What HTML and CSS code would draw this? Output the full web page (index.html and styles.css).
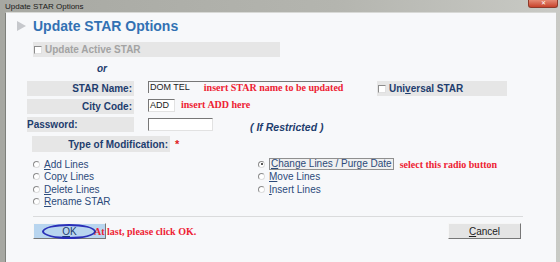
FILE: index.html
```html
<!DOCTYPE html>
<html lang="en">
<head>
  <meta charset="UTF-8">
  <title>Update STAR Options</title>
  <link rel="stylesheet" href="styles.css">
</head>
<body>
  <div class="window">
    <div class="titlebar">
      <span class="title">Update STAR Options</span>
      <span class="close">&#x2715;</span>
    </div>
    <div class="content">
      <h1><span class="arrow"></span>Update STAR Options</h1>

      <div class="band active"><span class="chk"></span>Update Active STAR</div>
      <div class="or">or</div>

      <div class="row first">
        <div class="label">STAR Name:</div>
        <div class="field wide"><span>DOM TEL</span><span class="note">insert STAR name to be updated</span></div>
        <div class="band universal"><span class="chk"></span><span>Uni<u>v</u>ersal STAR</span></div>
      </div>
      <div class="row">
        <div class="label">City Code:</div>
        <div class="field small">ADD</div>
        <span class="note">insert ADD here</span>
      </div>
      <div class="row">
        <div class="label left">Password:</div>
        <div class="field pass"></div>
        <span class="hint">( If Restricted )</span>
      </div>

      <div class="type-row">
        <div class="band type">Type of Modification:</div>
        <span class="star">*</span>
      </div>

      <div class="radios">
        <div class="col">
          <div class="radio"><span class="dot"></span><span><u>A</u>dd Lines</span></div>
          <div class="radio"><span class="dot"></span><span>Cop<u>y</u> Lines</span></div>
          <div class="radio"><span class="dot"></span><span><u>D</u>elete Lines</span></div>
          <div class="radio"><span class="dot"></span><span><u>R</u>ename STAR</span></div>
        </div>
        <div class="col right">
          <div class="radio"><span class="dot on"></span><span class="focus"><u>C</u>hange Lines / Purge Date</span><span class="note">select this radio button</span></div>
          <div class="radio"><span class="dot"></span><span><u>M</u>ove Lines</span></div>
          <div class="radio"><span class="dot"></span><span><u>I</u>nsert Lines</span></div>
        </div>
      </div>

      <div class="rule"></div>

      <div class="buttons">
        <div class="ok-wrap">
          <button class="btn ok"><u>O</u>K</button>
          <span class="note">At last, please click OK.</span>
        </div>
        <button class="btn"><u>C</u>ancel</button>
      </div>
    </div>
  </div>
</body>
</html>
```

FILE: styles.css
```css
body {
  margin: 0;
  font-family: "Liberation Sans", Arial, sans-serif;
  background: #a8a9a3;
}
.window {
  width: 560px;
  height: 262px;
  display: flex;
  flex-direction: column;
  background: linear-gradient(90deg, #a7a8a2 0%, #b4b5af 60%, #c9cac5 100%);
}
.titlebar {
  height: 12px;
  display: flex;
  justify-content: space-between;
  align-items: flex-start;
  padding: 0 2px 0 5px;
}
.title {
  font-size: 8px;
  color: #1a1a1a;
  line-height: 12px;
  margin-top: 1px;
}
.close {
  width: 28px;
  height: 7px;
  background: linear-gradient(#e58a74, #c8432c);
  border: 1px solid #8e3a2a;
  border-top: none;
  border-radius: 0 0 3px 3px;
  color: #fff;
  font-size: 6px;
  line-height: 7px;
  text-align: center;
}
.content {
  flex: 1;
  margin: 0 4px 0 5px;
  background: #f7f8fa;
  border-left: 1px solid #7e807b;
  border-top: 1px solid #d8d9d6;
  padding-left: 21px;
  white-space: nowrap;
}
h1 {
  margin: 4px 0 0 -10px;
  font-size: 14px;
  color: #3271b3;
  display: flex;
  align-items: center;
  gap: 7px;
  height: 17px;
}
.arrow {
  width: 0;
  height: 0;
  border-left: 9px solid #c6c8cc;
  border-top: 5px solid transparent;
  border-bottom: 5px solid transparent;
}
.band {
  background: #e6e6e6;
  height: 15px;
  display: flex;
  align-items: center;
  font-size: 10px;
  font-weight: bold;
  color: #1e3d6e;
}
.band.active {
  width: 247px;
  margin: 8px 0 0 6px;
  color: #a3a3a3;
}
.chk {
  width: 6px;
  height: 6px;
  border: 1px solid #8c8c8c;
  border-right-color: #e0e0e0;
  border-bottom-color: #e0e0e0;
  background: #fff;
  margin: 0 3px 0 1px;
}
.or {
  margin: 6px 0 0 70px;
  font-size: 10px;
  font-weight: bold;
  font-style: italic;
  color: #1e3d6e;
  height: 12px;
  line-height: 12px;
}
.row {
  display: flex;
  align-items: flex-start;
  height: 15px;
  margin-top: 3px;
}
.row.first { margin-top: 6px; }
.label {
  width: 105px;
  height: 15px;
  background: #e6e6e6;
  font-size: 10px;
  font-weight: bold;
  color: #1e3d6e;
  text-align: right;
  padding-right: 2px;
  line-height: 16px;
  margin-right: 14px;
}
.label.left { text-align: left; }
.field {
  height: 11px;
  background: #fff;
  border-top: 1px solid #777;
  border-left: 1px solid #777;
  border-right: 1px solid #e2e2e2;
  border-bottom: 1px solid #e2e2e2;
  font-size: 9px;
  line-height: 11px;
  color: #222;
  padding-left: 1px;
  display: flex;
  gap: 14px;
}
.field.wide { width: 192px; background: transparent; border-right: none; border-bottom: none; }
.field.small { width: 24px; }
.field.pass { width: 62px; margin-top: 1px; }
.note {
  font-family: "Liberation Serif", "Times New Roman", serif;
  font-weight: bold;
  font-size: 10px;
  color: #ee2233;
}
.row > .note { margin-left: 6px; line-height: 12px; }
.band.universal {
  width: 130px;
  margin-left: 35px;
  font-size: 10px;
}
.hint {
  margin: 4px 0 0 37px;
  font-size: 10.5px;
  font-weight: bold;
  font-style: italic;
  color: #1e3d6e;
}
.type-row {
  display: flex;
  align-items: flex-start;
  margin: 4px 0 0 5px;
}
.band.type {
  width: 136px;
  height: 16px;
  justify-content: flex-end;
  padding-right: 2px;
}
.star {
  color: #e02020;
  font-weight: bold;
  font-size: 11px;
  margin: 2px 0 0 5px;
}
.radios {
  display: flex;
  margin: 6px 0 0 6px;
}
.col { width: 225px; }
.col.right { width: 280px; }
.radio {
  display: flex;
  align-items: center;
  height: 12.5px;
  font-size: 10px;
  color: #2c4a7a;
}
.dot {
  width: 5px;
  height: 5px;
  border-radius: 50%;
  border: 1px solid #8c8c8c;
  border-right-color: #ddd;
  border-bottom-color: #ddd;
  background: #fff;
  margin-right: 4px;
  position: relative;
}
.dot.on::after {
  content: "";
  position: absolute;
  left: 1.5px;
  top: 1.5px;
  width: 2px;
  height: 2px;
  border-radius: 50%;
  background: #222;
}
.focus {
  border: 1px solid #8f8f8f;
  background: #f0f0f0;
  padding: 0 1px;
  line-height: 10px;
  margin-right: 6px;
}
.rule {
  height: 1px;
  width: 490px;
  background: #dadbdc;
  margin: 8px 0 0 6px;
}
.buttons {
  display: flex;
  justify-content: space-between;
  width: 488px;
  margin: 6px 0 0 6px;
}
.ok-wrap {
  display: flex;
  align-items: center;
}
.ok-wrap .note { margin-left: -12px; position: relative; }
.btn {
  width: 73px;
  height: 16px;
  padding: 0;
  font-family: "Liberation Sans", Arial, sans-serif;
  font-size: 10px;
  color: #222;
  background: #e4e4e4;
  border: 1px solid #f6f6f6;
  border-right-color: #777;
  border-bottom-color: #777;
}
.btn.ok {
  background: #b8d5ef;
  color: #1e3d6e;
  position: relative;
}
.btn.ok::before {
  content: "";
  position: absolute;
  left: 8px;
  top: 0;
  width: 50px;
  height: 11px;
  border: 2px solid #2a2fb8;
  border-radius: 50%;
}
```
